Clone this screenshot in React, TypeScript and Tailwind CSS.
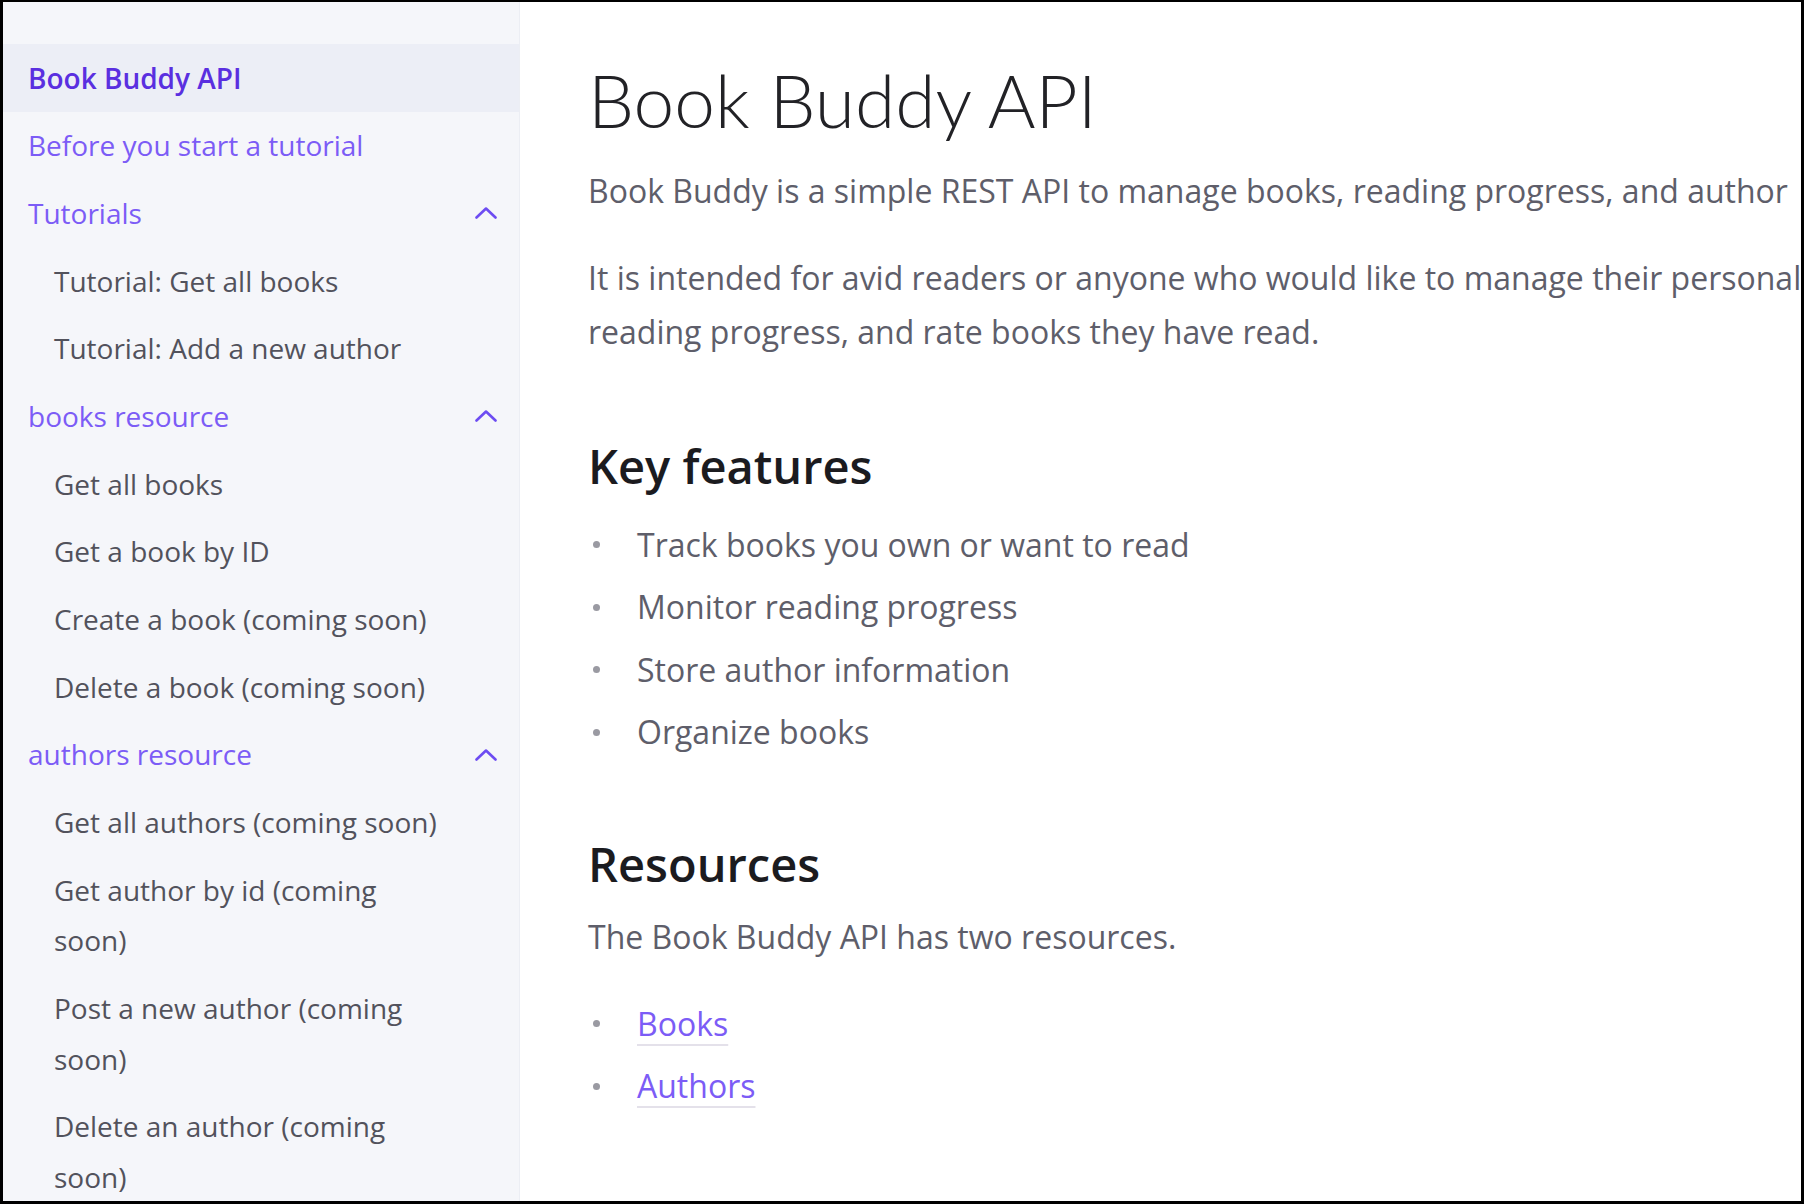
import React from "react";

type NavItem = {
  label: React.ReactNode;
  kind: "active" | "top" | "sub";
  chevron?: boolean;
};

const items: NavItem[] = [
  { label: "Book Buddy API", kind: "active" },
  { label: "Before you start a tutorial", kind: "top" },
  { label: "Tutorials", kind: "top", chevron: true },
  { label: "Tutorial: Get all books", kind: "sub" },
  { label: "Tutorial: Add a new author", kind: "sub" },
  { label: "books resource", kind: "top", chevron: true },
  { label: "Get all books", kind: "sub" },
  { label: "Get a book by ID", kind: "sub" },
  { label: "Create a book (coming soon)", kind: "sub" },
  { label: "Delete a book (coming soon)", kind: "sub" },
  { label: "authors resource", kind: "top", chevron: true },
  { label: "Get all authors (coming soon)", kind: "sub" },
  {
    label: (
      <>
        Get author by id (coming
        <br />
        soon)
      </>
    ),
    kind: "sub",
  },
  {
    label: (
      <>
        Post a new author (coming
        <br />
        soon)
      </>
    ),
    kind: "sub",
  },
  {
    label: (
      <>
        Delete an author (coming
        <br />
        soon)
      </>
    ),
    kind: "sub",
  },
];

function Chevron() {
  return (
    <svg width="22" height="12" viewBox="0 0 22 12" fill="none" className="shrink-0">
      <polyline
        points="1.5,10.5 11,1.5 20.5,10.5"
        stroke="#6d4cf2"
        strokeWidth="2.6"
        strokeLinecap="round"
        strokeLinejoin="round"
      />
    </svg>
  );
}

function Bullet({ children }: { children: React.ReactNode }) {
  return (
    <li className="flex items-center leading-[54px]">
      <span className="w-[49px] shrink-0 flex items-center">
        <span className="block ml-[5px] w-[7px] h-[7px] rounded-full bg-[#9a9aa2]" />
      </span>
      <span className="whitespace-nowrap">{children}</span>
    </li>
  );
}

export default function App() {
  return (
    <div
      className="w-[1804px] h-[1204px] flex overflow-hidden bg-white border-t-2 border-x-[3px] border-b-[3px] border-black"
      style={{ fontFamily: '"Open Sans", "Noto Sans", sans-serif' }}
    >
      <aside className="w-[517px] shrink-0 bg-[#f5f6fa] border-r border-[#eceef4] pt-[42px] overflow-hidden">
        {items.map((it, i) => {
          const base = "flex items-center justify-between py-[8.6px] leading-[50.5px] text-[28px] pr-[22px]";
          if (it.kind === "active") {
            return (
              <div key={i} className={base + " pl-[25px] bg-[#eceef6] text-[#5a2fe0] font-semibold"}>
                <span>{it.label}</span>
              </div>
            );
          }
          if (it.kind === "top") {
            return (
              <div key={i} className={base + " pl-[25px] text-[#7c5cf6]"}>
                <span>{it.label}</span>
                {it.chevron ? <Chevron /> : null}
              </div>
            );
          }
          return (
            <div key={i} className={base + " pl-[51px] text-[#52525c]"}>
              <span>{it.label}</span>
            </div>
          );
        })}
      </aside>

      <main className="flex-1 min-w-0 overflow-hidden pl-[68px] pt-[55px]">
        <h1
          className="text-[73px] leading-[1.2] font-light text-[#222226] whitespace-nowrap mb-[19px]"
          style={{ fontFamily: 'Lato, "Open Sans", sans-serif' }}
        >
          Book Buddy API
        </h1>

        <p className="text-[32px] leading-[54px] text-[#5e5e6a] whitespace-nowrap mb-[33px]">
          Book Buddy is a simple REST API to manage books, reading progress, and author
        </p>
        <p className="text-[32px] leading-[54px] text-[#5e5e6a] whitespace-nowrap">
          It is intended for avid readers or anyone who would like to manage their personal
          <br />
          reading progress, and rate books they have read.
        </p>

        <h2 className="mt-[77px] text-[47px] leading-[61px] font-semibold text-[#1b1b1f] whitespace-nowrap">
          Key features
        </h2>
        <ul className="mt-[21px] flex flex-col gap-[8.6px] text-[32px] text-[#5e5e6a]">
          <Bullet>Track books you own or want to read</Bullet>
          <Bullet>Monitor reading progress</Bullet>
          <Bullet>Store author information</Bullet>
          <Bullet>Organize books</Bullet>
        </ul>

        <h2 className="mt-[75px] text-[47px] leading-[61px] font-semibold text-[#1b1b1f] whitespace-nowrap">
          Resources
        </h2>
        <p className="mt-[15px] text-[32px] leading-[54px] text-[#5e5e6a] whitespace-nowrap">
          The Book Buddy API has two resources.
        </p>
        <ul className="mt-[32.5px] flex flex-col gap-[8.6px] text-[32px] text-[#5e5e6a]">
          <Bullet>
            <a className="text-[#7c5cf6] underline decoration-[#e4e1ea] decoration-2 underline-offset-[8px]">
              Books
            </a>
          </Bullet>
          <Bullet>
            <a className="text-[#7c5cf6] underline decoration-[#e4e1ea] decoration-2 underline-offset-[8px]">
              Authors
            </a>
          </Bullet>
        </ul>
      </main>
    </div>
  );
}
